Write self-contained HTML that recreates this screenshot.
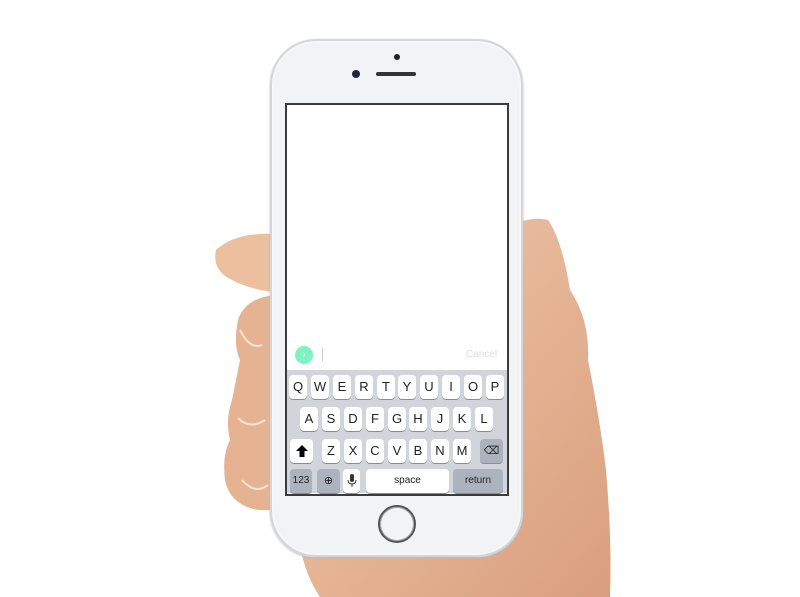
<!DOCTYPE html>
<html><head><style>
body{margin:0;width:800px;height:597px;background:#fff;position:relative;overflow:hidden;font-family:"Liberation Sans",sans-serif}
.a{position:absolute}
.k{position:absolute;background:#fff;border-radius:4px;box-shadow:0 1px 0 #8a8d93;font-size:13px;color:#222;text-align:center;line-height:24px;width:18px;height:24px}
.g{background:#adb3bc}
</style></head><body>
<svg class="a" style="left:0;top:0" width="800" height="597">
<defs>
<linearGradient id="sk" x1="0" y1="0" x2="1" y2="1"><stop offset="0" stop-color="#f0c9ac"/><stop offset="1" stop-color="#d99f7e"/></linearGradient>
</defs>
<path d="M500 230 Q530 215 548 220 Q562 240 570 290 Q590 320 588 360 Q600 420 606 470 Q612 540 610 597 L320 597 Q305 575 300 545 L500 500 Z" fill="url(#sk)"/>
<path d="M275 234 Q235 232 216 250 Q212 268 228 278 Q250 290 275 292 Z" fill="#ecbf9f"/>
<path d="M275 295 Q245 298 238 320 Q233 345 240 360 Q236 380 232 400 Q225 420 230 440 Q222 455 225 480 Q230 505 258 510 L275 510 Z" fill="#e6b392"/>
<path d="M240 330 Q250 350 262 345 M238 418 Q250 430 265 420 M242 480 Q255 495 268 485" stroke="#f7e3d6" stroke-width="2" fill="none"/>
</svg>
<div class="a" style="left:270px;top:39px;width:253px;height:518px;border-radius:46px;background:#f2f3f5;box-shadow:inset 0 0 0 2px #d3d5d8,inset 0 0 0 4px #f7f7f8,0 1px 2px #bbb"></div>
<div class="a" style="left:394px;top:54px;width:6px;height:6px;border-radius:50%;background:#222"></div>
<div class="a" style="left:352px;top:70px;width:8px;height:8px;border-radius:50%;background:#1b2540"></div>
<div class="a" style="left:376px;top:72px;width:40px;height:4px;border-radius:2px;background:#333"></div>
<div class="a" style="left:378px;top:505px;width:34px;height:34px;border-radius:50%;border:2px solid #555;box-shadow:inset 0 0 0 1px #aaa"></div>
<div class="a" style="left:285px;top:103px;width:220px;height:389px;border:2px solid #3a3b3d;background:#fff"></div>
<div class="a" style="left:287px;top:370px;width:220px;height:123px;background:#d1d4da"></div>
<div class="a" style="left:295px;top:346px;width:18px;height:18px;border-radius:50%;background:#7ef2c3;color:#fff;font-size:10px;line-height:18px;text-align:center">›</div>
<div class="a" style="left:322px;top:348px;width:1px;height:13px;background:#ccc"></div>
<div class="a" style="left:466px;top:349px;font-size:10px;color:#dcdcdc">Cancel</div>
<div class="k" style="left:289px;top:375px">Q</div><div class="k" style="left:311px;top:375px">W</div><div class="k" style="left:333px;top:375px">E</div><div class="k" style="left:355px;top:375px">R</div><div class="k" style="left:377px;top:375px">T</div><div class="k" style="left:398px;top:375px">Y</div><div class="k" style="left:420px;top:375px">U</div><div class="k" style="left:442px;top:375px">I</div><div class="k" style="left:464px;top:375px">O</div><div class="k" style="left:486px;top:375px">P</div>
<div class="k" style="left:300px;top:407px">A</div><div class="k" style="left:322px;top:407px">S</div><div class="k" style="left:344px;top:407px">D</div><div class="k" style="left:366px;top:407px">F</div><div class="k" style="left:388px;top:407px">G</div><div class="k" style="left:409px;top:407px">H</div><div class="k" style="left:431px;top:407px">J</div><div class="k" style="left:453px;top:407px">K</div><div class="k" style="left:475px;top:407px">L</div>
<div class="k" style="left:290px;top:439px;width:23px"><svg width="14" height="14" style="margin-top:5px" viewBox="0 0 14 14"><path d="M7 1 L13 7 H9.5 V13 H4.5 V7 H1 Z" fill="#000"/></svg></div>
<div class="k" style="left:322px;top:439px">Z</div><div class="k" style="left:344px;top:439px">X</div><div class="k" style="left:366px;top:439px">C</div><div class="k" style="left:388px;top:439px">V</div><div class="k" style="left:409px;top:439px">B</div><div class="k" style="left:431px;top:439px">N</div><div class="k" style="left:453px;top:439px">M</div>
<div class="k g" style="left:480px;top:439px;width:23px;font-size:11px">⌫</div>
<div class="k g" style="left:290px;top:469px;width:22px;font-size:10px">123</div>
<div class="k g" style="left:317px;top:469px;width:23px;font-size:11px">⊕</div>
<div class="k" style="left:343px;top:469px;width:17px"><svg width="10" height="14" style="margin-top:5px" viewBox="0 0 10 14"><rect x="3" y="0" width="4" height="8" rx="2" fill="#333"/><path d="M1 6 Q1 10 5 10 Q9 10 9 6 M5 10 V13" stroke="#333" fill="none"/></svg></div>
<div class="k" style="left:366px;top:469px;width:83px;font-size:10px">space</div>
<div class="k g" style="left:453px;top:469px;width:50px;font-size:10px">return</div>
</body></html>
